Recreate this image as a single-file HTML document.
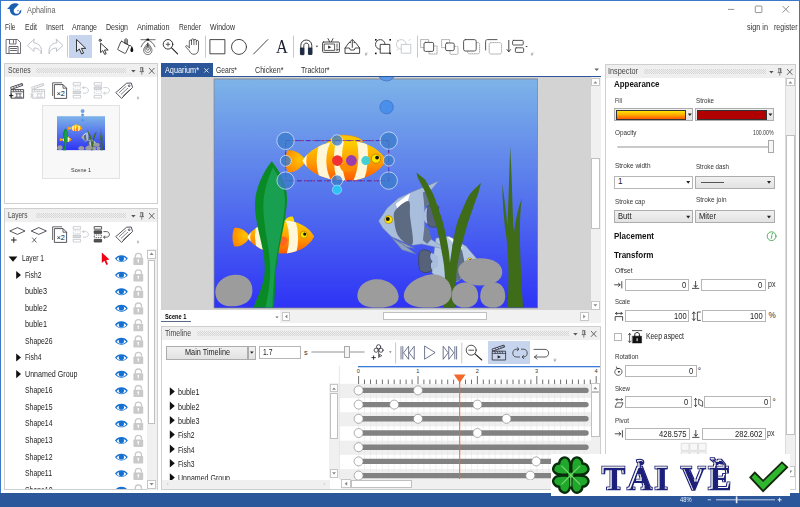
<!DOCTYPE html>
<html lang="en">
<head>
<meta charset="utf-8">
<title>Aphalina</title>
<style>
html,body{margin:0;padding:0;}
body{width:800px;height:507px;position:relative;overflow:hidden;background:#fff;font-family:"Liberation Sans",sans-serif;font-size:7.8px;color:#222;}
.a{position:absolute;}
.t{position:absolute;white-space:nowrap;line-height:10px;font-size:8.2px;color:#333;}
.b{font-weight:bold;color:#111;}
.panel{position:absolute;border:1px solid #cfcfcf;background:#fff;box-sizing:border-box;}
.phead{position:absolute;left:0;top:0;right:0;height:13px;background:#efefef;}
.grip{position:absolute;top:4px;height:5px;background-image:conic-gradient(#d6d6d6 25%,transparent 0 50%,#d6d6d6 0 75%,transparent 0);background-size:2px 2px;}
.inp{position:absolute;box-sizing:border-box;border:1px solid #b6b6b6;background:#fff;}
.btn{position:absolute;box-sizing:border-box;border:1px solid #acacac;background:linear-gradient(#f1f1f1,#e2e2e2);}
svg{position:absolute;overflow:visible;}
</style>
</head>
<body>
<div class="a" style="left:0;top:0;width:1.2px;height:507px;background:#3c78c8;"></div>
<div class="a" style="left:0;top:0;width:800px;height:0.9px;background:#3c78c8;"></div>
<div class="a" style="left:799px;top:0;width:1px;height:507px;background:#3c78c8;"></div>
<div class="a" style="left:0;top:493px;width:800px;height:14px;background:#2b579a;"></div>
<!-- TITLEBAR -->
<div id="titlebar">
<svg style="left:0;top:0" width="24" height="18" viewBox="0 0 24 18">
<path d="M19 4.5C17.6 3.4 15.4 3 13.4 3.4C11 3.9 9.6 5.4 9.2 7C8.6 7.4 7.8 8 7.1 8.7C8.1 8.9 9 9 9.8 9C9.6 11.4 10.8 13.8 13 15C15.4 16.2 18.6 15.6 20.2 13.6C21.2 12.4 21.5 11 21.2 9.5C20.8 10.3 20.2 10.9 19.4 11.2C19.6 12 19.2 13 18.2 13.5C16.8 14.2 15 13.8 14.2 12.6C13.4 11.4 13.6 9.8 14.6 8.6C15.6 7.4 17 6.6 17.6 5.4C18 5 18.6 4.7 19 4.5Z" fill="#1a60b0"/>
<path d="M18.8 10.2C18.4 11 17.6 11.4 16.8 11.2C17.6 10.9 18 10.4 18 9.8Z" fill="#1a60b0"/>
</svg>
<div class="t" style="transform:scaleX(0.894);transform-origin:0 0;left:27.4px;top:5.8px;color:#666">Aphalina</div>
<svg style="left:726px;top:4px" width="66" height="12" viewBox="0 0 66 12" fill="none" stroke="#777" stroke-width="0.8">
<path d="M2 5.4H8.2"/><rect x="29.3" y="2" width="6.6" height="6.6" rx="0.8"/><path d="M56.6 2L63 8.6M63 2L56.6 8.6"/>
</svg>
</div>
<!-- MENU -->
<div id="menubar">
<div class="t" style="transform:scaleX(0.795);transform-origin:0 0;left:5px;top:22.5px">File</div>
<div class="t" style="transform:scaleX(0.850);transform-origin:0 0;left:25px;top:22.5px">Edit</div>
<div class="t" style="transform:scaleX(0.854);transform-origin:0 0;left:45.5px;top:22.5px">Insert</div>
<div class="t" style="transform:scaleX(0.858);transform-origin:0 0;left:72px;top:22.5px">Arrange</div>
<div class="t" style="transform:scaleX(0.863);transform-origin:0 0;left:106px;top:22.5px">Design</div>
<div class="t" style="transform:scaleX(0.892);transform-origin:0 0;left:137px;top:22.5px">Animation</div>
<div class="t" style="transform:scaleX(0.819);transform-origin:0 0;left:178.5px;top:22.5px">Render</div>
<div class="t" style="transform:scaleX(0.858);transform-origin:0 0;left:210px;top:22.5px">Window</div>
<div class="t" style="transform:scaleX(0.887);transform-origin:0 0;left:747px;top:23px;color:#333">sign in</div>
<div class="t" style="transform:scaleX(0.860);transform-origin:0 0;left:773.5px;top:23px;color:#333">register</div>
</div>
<!-- TOOLBAR -->
<div id="toolbar">
<div class="a" style="left:69px;top:35px;width:22.5px;height:22.5px;background:#c6d4ee"></div>
<svg style="left:0;top:0" width="800" height="62" viewBox="0 0 800 62" fill="none" stroke="#3b3b45" stroke-width="0.9" stroke-linejoin="round" stroke-linecap="round">
<!-- separators -->
<g stroke="#c8c8c8" stroke-width="1"><path d="M67.5 36V57M205.5 36V57M293.5 36V57M417.5 36V57"/></g>
<!-- save -->
<g stroke="#4c4c58" stroke-width="0.8"><path d="M6.5 39.5H17.5L20.5 42.5V53.5H6.5Z"/><path d="M9.5 39.5V44H16V39.5M13.5 40.5V43"/></g><path d="M9 53.5V46.5H18V53.5M10.5 48.5H16.5M10.5 50.5H16.5" stroke="#555"/>
<!-- undo / redo -->
<g stroke="#bfc4ca" stroke-width="1"><path id="undo" d="M34 39.3L27.5 45.5L34 51.5V48C38 48 40.8 50.2 41.3 54C42.3 48 40 43.4 34 42.8Z"/>
<path d="M56.5 39.3L63 45.5L56.5 51.5V48C52.5 48 49.7 50.2 49.2 54C48.2 48 50.5 43.4 56.5 42.8Z"/></g>
<!-- arrow cursor -->
<path d="M76.5 39.8V51.6L79.3 49L81.6 54L83.6 53.1L81.4 48.4H85.4Z" stroke="#222" fill="#e8ecf6"/>
<!-- node tool -->
<circle cx="100.2" cy="40.3" r="1.1" stroke="#222"/><path d="M100.6 43.5V52.6L102.8 50.6L104.6 54.4L106.2 53.7L104.5 50H107.8Z" stroke="#222"/>
<!-- bucket -->
<g stroke="#222" stroke-width="0.8"><path d="M121.8 41.4L128.6 45Q129.3 45.5 129 46.2L125.8 52.9Q125.4 53.6 124.6 53.3L118.2 49.9Q117.5 49.4 117.9 48.7L120.8 41.8Q121.2 41.1 121.8 41.4Z"/><path d="M124.8 43.4V39.7Q124.8 39 125.4 39H126.7Q127.3 39 127.3 39.7V44.6M126 40.4V44M128.9 45.3L130.6 45.7"/></g>
<path d="M131.8 45.4C132.6 47.6 133.3 49 133.3 50.2C133.3 51.3 132.6 52 131.8 52C131 52 130.4 51.3 130.4 50.2C130.4 49 131.2 47.6 131.8 45.4Z" fill="#111" stroke="none"/>
<!-- pen -->
<path d="M140.9 39.6H155.1" stroke="#8a8a8a" stroke-width="1.1"/><ellipse cx="147.8" cy="39.6" rx="1.5" ry="1" fill="#111" stroke="none"/>
<path d="M141.2 46.8C142.6 43.2 145 40.6 147.8 40.2C150.6 40.6 153.4 43.2 155 46.8" stroke="#222" stroke-width="0.7"/>
<g stroke="#222" stroke-width="0.6"><path d="M147.8 43.2C145.2 45.8 143.6 48.4 143.6 50.2C143.6 52.8 145.4 54.6 147.8 54.6C150.2 54.6 152 52.8 152 50.2C152 48.4 150.4 45.8 147.8 43.2Z"/><path d="M147.8 44.6C146.2 46.6 145 48.2 145 49.6C145 51.2 146.2 52.4 147.8 52.4C149.4 52.4 150.6 51.2 150.6 49.6C150.6 48.2 149.4 46.6 147.8 44.6Z"/><path d="M147.8 45.8C147 47.2 146.4 48 146.4 48.8C146.4 49.6 147 50.2 147.8 50.2C148.6 50.2 149.2 49.6 149.2 48.8C149.2 48 148.6 47.2 147.8 45.8ZM147.8 43.6V48"/></g>
<!-- zoom -->
<circle cx="168" cy="44.3" r="4.8" stroke="#222"/><path d="M171.6 47.8L177.6 53.8" stroke="#222" stroke-width="1.1"/><path d="M166.2 44.3H169.8M168 42.5V46.1" stroke="#222" stroke-width="0.7"/>
<!-- hand -->
<path d="M189.3 47.6V41.1C189.3 39.8 191.5 39.8 191.5 41.1V39.9C191.5 38.5 193.9 38.5 193.9 39.9V40.3C193.9 39 196.3 39 196.3 40.3V41.3C196.3 40.1 198.5 40.1 198.5 41.3V49C198.5 52.5 196.6 54.3 194 54.3C191.6 54.3 190.4 53 189.2 50.6L186 47.2C185.2 46.2 186.2 45.2 187.2 45.8L189.3 47.6M191.5 41V44.6M193.9 40.3V44.6M196.3 41.3V44.6" stroke="#222" stroke-width="0.7"/>
<!-- rect / circle / line -->
<rect x="210.3" y="39.6" width="14.6" height="14.2" stroke="#333"/><circle cx="239" cy="46.9" r="7.5" stroke="#333"/><path d="M253.6 54L267.8 39.6" stroke="#333"/>
<!-- magnet -->
<path d="M300.8 54.3V45.5C300.8 38.2 311.8 38.2 311.8 45.5V54.3H308.8V45.8C308.8 42.2 303.8 42.2 303.8 45.8V54.3Z" stroke="#222"/><path d="M300.8 48H303.8V54.3H300.8ZM308.8 48H311.8V54.3H308.8Z" fill="#1c2a44" stroke="#1c2a44"/><path d="M315.6 45.8H318.2L316.9 47.2Z" fill="#333" stroke="none"/>
<!-- tv -->
<rect x="322.6" y="42" width="16.8" height="10.4" rx="1" stroke="#333"/><rect x="324.6" y="44" width="10" height="6.4" stroke="#333" stroke-width="0.8"/><path d="M328.2 45.6L331.2 47.2L328.2 48.8Z" fill="#222" stroke="none"/><path d="M329.6 41.8L328 38.6M331.4 41.8L333 38.6" stroke="#333"/><path d="M337 44V47.4" stroke="#333" stroke-width="0.8"/><circle cx="337" cy="49.6" r="0.9" stroke="#333" stroke-width="0.7"/>
<!-- upload -->
<path d="M345 48L349 42.6H350.6M354 42.6H355.6L359.6 48V53.4H345V48H349.4L350.4 50H354.2L355.2 48H359.6" stroke="#333"/><path d="M352.3 47.4V40M349.8 42L352.3 39.4L354.8 42" stroke="#333"/>
<!-- overflow marks -->
<g stroke="#888" stroke-width="0.6"><path d="M365.2 53.2H367.2M365.6 54.4H366.8L366.2 55.2Z M531.2 53.2H533.2M531.6 54.4H532.8L532.2 55.2Z"/></g>
<!-- group -->
<circle cx="380.3" cy="44.4" r="4.8" stroke="#333"/><rect x="380.6" y="44.4" width="9.2" height="8.8" fill="#fff" stroke="#333"/><g fill="#111" stroke="none"><rect x="375" y="39" width="1.6" height="1.6"/><rect x="389.4" y="39" width="1.6" height="1.6"/><rect x="375" y="52.6" width="1.6" height="1.6"/><rect x="389.4" y="52.6" width="1.6" height="1.6"/></g>
<!-- ungroup (disabled) -->
<g stroke="#c2c6cc"><circle cx="401.3" cy="44.4" r="4.8"/><rect x="401.6" y="44.4" width="9.2" height="8.8" fill="#fff"/><path d="M397 40L398 41M410 39.4L409 40.4M397 50L398 49" stroke-width="0.8"/></g>
<!-- order icons -->
<rect x="420.6" y="39.6" width="8" height="8" stroke="#999" stroke-dasharray="1 1" stroke-width="0.8"/><rect x="429" y="46" width="8" height="8" stroke="#999" stroke-dasharray="1 1" stroke-width="0.8"/><rect x="424" y="42.4" width="9.6" height="9" rx="1.4" fill="#fff" stroke="#444"/>
<rect x="441.6" y="39.6" width="8" height="8" stroke="#999" stroke-dasharray="1 1" stroke-width="0.8"/><rect x="450" y="46.4" width="8" height="8" rx="1" stroke="#999" stroke-dasharray="1 1" stroke-width="0.8"/><rect x="445.6" y="43" width="8.6" height="7.6" rx="1.4" fill="#fff" stroke="#444"/>
<rect x="467.6" y="42.6" width="12" height="11.2" rx="1.6" stroke="#999" stroke-dasharray="1 1" stroke-width="0.8"/><rect x="463.6" y="39.6" width="12.6" height="11.4" rx="1.8" fill="#fff" stroke="#444"/>
<path d="M485.6 50V41.4C485.6 40.2 486.4 39.6 487.4 39.6H497" stroke="#444"/><rect x="489.2" y="42.6" width="12.4" height="11.4" rx="1.8" fill="#fff" stroke="#999" stroke-dasharray="1 1" stroke-width="0.8"/>
<path d="M508.8 40.4V51.6M507 49.6L508.8 51.8L510.6 49.6" stroke="#333"/><rect x="512.6" y="40.4" width="10.6" height="4.6" rx="0.8" stroke="#444"/><rect x="515.4" y="47.8" width="8.2" height="4.6" rx="0.8" stroke="#444"/><path d="M525.4 46H527.8L526.6 47.3Z" fill="#333" stroke="none"/>
</svg>
<div class="a" style="left:275.5px;top:35.5px;font-family:'Liberation Serif',serif;font-size:19px;line-height:22px;color:#1b2233;transform:scaleX(0.86);transform-origin:0 0;">A</div>
</div>
<!-- SCENES -->
<div id="scenes">
<div class="panel" style="left:4px;top:63px;width:154px;height:141px"><div class="phead"></div><div class="grip" style="left:31px;width:90px"></div></div>
<div class="t" style="transform:scaleX(0.824);transform-origin:0 0;left:8px;top:66.1px;color:#444">Scenes</div>
<svg style="left:131px;top:66px" width="26" height="10" viewBox="0 0 26 10" fill="none" stroke="#555" stroke-width="0.8"><path d="M0.2 4H4.6L2.4 6.4Z" fill="#555" stroke="none"/><path d="M9.2 1.6H12.2M9.8 1.6V5.6M11.8 1.6V5.6M8.6 5.6H13M10.8 5.6V8.6M11.6 2V5.4" stroke-width="0.7"/><path d="M18 2L23.4 7.8M23.4 2L18 7.8" stroke-width="0.9"/></svg><svg style="left:0;top:0" width="160" height="110" viewBox="0 0 160 110" fill="none" stroke="#2b2b35" stroke-width="0.8" stroke-linejoin="round">
<g id="clapA"><path d="M10.6 87.4L22.2 83.4L22.8 85.4L11.2 89.4Z"/><path d="M13 86.6L14.4 88.2M15.6 85.7L17 87.3M18.2 84.8L19.6 86.4M20.6 84L21.8 85.5" stroke-width="0.7"/><rect x="11" y="89.6" width="12.6" height="8.6"/><path d="M11 91.8H23.6M13 89.6L14 91.8M15.4 89.6L16.4 91.8M17.8 89.6L18.8 91.8M20.2 89.6L21.2 91.8" stroke-width="0.7"/><path d="M15.4 93.8H21.6M16.8 93.8V97M20 93.8V97M14.6 97.2H22.4" stroke-width="0.7"/><path d="M9 95.6H13.4M11.2 93.4V97.8" stroke="#111" stroke-width="0.9"/></g>
<g stroke="#bdbfc4"><path d="M31.6 87.4L43.2 83.4L43.8 85.4L32.2 89.4Z"/><path d="M34 86.6L35.4 88.2M36.6 85.7L38 87.3M39.2 84.8L40.6 86.4M41.6 84L42.8 85.5" stroke-width="0.7"/><rect x="32" y="89.6" width="12.6" height="8.6"/><path d="M32 91.8H44.6M34 89.6L35 91.8M36.4 89.6L37.4 91.8M38.8 89.6L39.8 91.8M41.2 89.6L42.2 91.8" stroke-width="0.7"/><path d="M36.4 93.8H42.6M37.8 93.8V97M41 93.8V97M35.6 97.2H43.4" stroke-width="0.7"/><path d="M30.2 93.6L34 97.6M34 93.6L30.2 97.6" stroke-width="0.8"/></g>
<g id="dupA"><path d="M52.6 96V82.8H62" stroke="#444"/><path d="M54.4 84.6H63L66.6 88.2V98.4H54.4Z" fill="#fff"/><path d="M63 84.6V88.2H66.6" stroke-width="0.7"/></g>
<g stroke="#c2c4c9" stroke-width="0.8"><rect x="73.2" y="82.6" width="7.4" height="2.6"/><rect x="73.2" y="86.8" width="7.4" height="2.6" stroke-dasharray="1 0.8"/><rect x="73.2" y="91" width="7.4" height="2.6" fill="#d9dbde"/><rect x="73.2" y="95.4" width="7.4" height="2.6"/><path d="M82.4 87.6H85.4C89.4 87.6 89.4 93.2 85.4 93.2H83M84.2 86.2L82.4 87.6L84.2 89"/></g>
<g stroke="#c2c4c9" stroke-width="0.8"><rect x="94.2" y="82.6" width="7.4" height="2.6"/><rect x="94.2" y="86.8" width="7.4" height="2.6" fill="#d9dbde"/><rect x="94.2" y="91" width="7.4" height="2.6" stroke-dasharray="1 0.8"/><rect x="94.2" y="95.4" width="7.4" height="2.6"/><path d="M103.4 87.6H106.4C110.4 87.6 110.4 93.2 106.4 93.2H104M105.2 91.8L103.4 93.2L105.2 94.6"/></g>
<g id="tagA"><path d="M115.8 92.6L126.6 83.2L131.2 83L132.6 87.4L121.6 98.4Z"/><circle cx="129.2" cy="85.8" r="0.9" stroke-width="0.7"/><path d="M119 92.8L126.2 86.2M120.8 94.6L128 88M122.6 96.2L129.6 89.8" stroke-width="0.6"/></g>
<path d="M137 97.2H139M137.4 98.4H138.6L138 99.2Z" stroke="#888" stroke-width="0.6"/>
</svg>
<div class="t" style="left:56.6px;top:88.6px;font-size:7.4px;color:#111;letter-spacing:-0.2px">×2</div>
<div class="a" style="left:41.9px;top:104.5px;width:77.8px;height:74.2px;box-sizing:border-box;border:1px solid #e2e2e2;background:#f8f8f8"></div>
<svg style="left:0;top:0" width="160" height="200" viewBox="0 0 160 200"><use href="#scn" transform="translate(25.13 104.43) scale(0.14865)"/></svg>
<div class="t" style="transform:scaleX(0.880);transform-origin:0 0;left:70.8px;top:165.4px;font-size:6.2px;color:#333">Scene 1</div>
</div>
<!-- LAYERS -->
<div id="layers">
<div class="panel" style="left:4px;top:207.5px;width:154px;height:282.5px;overflow:hidden"><div class="phead"></div><div class="grip" style="left:31px;width:90px"></div></div>
<div class="t" style="transform:scaleX(0.793);transform-origin:0 0;left:8px;top:210.5px;color:#444">Layers</div>
<svg style="left:131px;top:210.5px" width="26" height="10" viewBox="0 0 26 10" fill="none" stroke="#555" stroke-width="0.8"><path d="M0.2 4H4.6L2.4 6.4Z" fill="#555" stroke="none"/><path d="M9.2 1.6H12.2M9.8 1.6V5.6M11.8 1.6V5.6M8.6 5.6H13M10.8 5.6V8.6M11.6 2V5.4" stroke-width="0.7"/><path d="M18 2L23.4 7.8M23.4 2L18 7.8" stroke-width="0.9"/></svg><svg style="left:0;top:144.4px" width="160" height="110" viewBox="0 0 160 110" fill="none" stroke="#2b2b35" stroke-width="0.8" stroke-linejoin="round">
<path d="M9.8 87L17.4 83.6L25 87L17.4 90.4Z"/><path d="M11 96H16.6M13.8 93.2V98.8" stroke="#111" stroke-width="0.9"/>
<path d="M31.2 87L38.8 83.6L46.4 87L38.8 90.4Z"/><path d="M32.2 93.6L36.4 98.4M36.4 93.6L32.2 98.4" stroke-width="0.7"/>
<g><path d="M52.6 96V82.8H62" stroke="#444"/><path d="M54.4 84.6H63L66.6 88.2V98.4H54.4Z" fill="#fff"/><path d="M63 84.6V88.2H66.6" stroke-width="0.7"/></g>
<g stroke="#c2c4c9" stroke-width="0.8"><rect x="73.2" y="82.6" width="7.4" height="2.6"/><rect x="73.2" y="86.8" width="7.4" height="2.6" stroke-dasharray="1 0.8"/><rect x="73.2" y="91" width="7.4" height="2.6" fill="#d9dbde"/><rect x="73.2" y="95.4" width="7.4" height="2.6"/><path d="M82.4 87.6H85.4C89.4 87.6 89.4 93.2 85.4 93.2H83M84.2 86.2L82.4 87.6L84.2 89"/></g>
<g stroke="#333" stroke-width="0.8"><rect x="94.2" y="82.6" width="7.4" height="2.6"/><rect x="94.2" y="86.8" width="7.4" height="2.6" fill="#555"/><rect x="94.2" y="91" width="7.4" height="2.6" stroke-dasharray="1 0.8"/><rect x="94.2" y="95.4" width="7.4" height="2.6" fill="#555"/><path d="M103.4 87.6H106.4C110.4 87.6 110.4 93.2 106.4 93.2H104M105.2 91.8L103.4 93.2L105.2 94.6"/></g>
<g><path d="M115.8 92.6L126.6 83.2L131.2 83L132.6 87.4L121.6 98.4Z"/><circle cx="129.2" cy="85.8" r="0.9" stroke-width="0.7"/><path d="M119 92.8L126.2 86.2M120.8 94.6L128 88M122.6 96.2L129.6 89.8" stroke-width="0.6"/></g>
<path d="M137 97.2H139M137.4 98.4H138.6L138 99.2Z" stroke="#888" stroke-width="0.6"/>
</svg>
<div class="t" style="left:56.6px;top:233px;font-size:7.4px;color:#111;letter-spacing:-0.2px">×2</div>
<div class="a" style="left:5px;top:248px;width:152px;height:241px;overflow:hidden">
<svg style="left:-5px;top:-248px" width="160" height="507" viewBox="0 0 160 507">
<defs><g id="eye"><path d="M-6.4 0C-3.6 -4.6 3.6 -4.6 6.4 0C3.6 4.6 -3.6 4.6 -6.4 0Z" fill="#1470d2"/><path d="M-4.9 0.4C-2.6 -2.5 2.6 -2.5 4.9 0.4C2.6 3.5 -2.6 3.5 -4.9 0.4Z" fill="#fff"/><circle cx="0" cy="-0.1" r="2.6" fill="#1470d2"/></g><g id="lock"><path d="M-3 1V-2.4C-3 -6.4 3.2 -6.4 3.2 -2.4V-1.4" fill="none" stroke="#c9c9c9" stroke-width="1.3"/><rect x="-4.9" y="-1.2" width="9.8" height="7.4" rx="0.8" fill="#c9c9c9"/><path d="M0 1V4" stroke="#fff" stroke-width="1"/><circle cx="0" cy="1.3" r="0.9" fill="#fff"/></g></defs>
<use href="#eye" x="121.4" y="258.6"/><use href="#lock" x="138.3" y="258.8"/><path d="M8.6 256.6H17.4L13 261.8Z" fill="#111"/>
<use href="#eye" x="121.4" y="275.1"/><use href="#lock" x="138.3" y="275.3"/><path d="M16.2 270.9V279.1L21 275.0Z" fill="#111"/>
<use href="#eye" x="121.4" y="291.7"/><use href="#lock" x="138.3" y="291.9"/>
<use href="#eye" x="121.4" y="308.2"/><use href="#lock" x="138.3" y="308.4"/>
<use href="#eye" x="121.4" y="324.8"/><use href="#lock" x="138.3" y="325.0"/>
<use href="#eye" x="121.4" y="341.2"/><use href="#lock" x="138.3" y="341.4"/>
<use href="#eye" x="121.4" y="357.6"/><use href="#lock" x="138.3" y="357.8"/><path d="M16.2 353.4V361.6L21 357.5Z" fill="#111"/>
<use href="#eye" x="121.4" y="374.2"/><use href="#lock" x="138.3" y="374.4"/><path d="M16.2 370.0V378.2L21 374.1Z" fill="#111"/>
<use href="#eye" x="121.4" y="390.7"/><use href="#lock" x="138.3" y="390.9"/>
<use href="#eye" x="121.4" y="407.3"/><use href="#lock" x="138.3" y="407.5"/>
<use href="#eye" x="121.4" y="423.9"/><use href="#lock" x="138.3" y="424.1"/>
<use href="#eye" x="121.4" y="440.5"/><use href="#lock" x="138.3" y="440.7"/>
<use href="#eye" x="121.4" y="457.1"/><use href="#lock" x="138.3" y="457.3"/>
<use href="#eye" x="121.4" y="473.6"/><use href="#lock" x="138.3" y="473.8"/>
<use href="#eye" x="121.4" y="490.2"/><use href="#lock" x="138.3" y="490.4"/>
<path d="M101.8 252.4V263L104.4 260.8L106.4 265L108 264.2L106.2 260.2L109.4 259.4Z" fill="#f00014"/>
</svg>
<div class="t" style="transform:scaleX(0.805);transform-origin:0 0;left:16.5px;top:6.0px;color:#222">Layer 1</div>
<div class="t" style="transform:scaleX(0.824);transform-origin:0 0;left:20px;top:22.5px;color:#222">Fish2</div>
<div class="t" style="transform:scaleX(0.895);transform-origin:0 0;left:20px;top:39.1px;color:#222">buble3</div>
<div class="t" style="transform:scaleX(0.895);transform-origin:0 0;left:20px;top:55.6px;color:#222">buble2</div>
<div class="t" style="transform:scaleX(0.895);transform-origin:0 0;left:20px;top:72.2px;color:#222">buble1</div>
<div class="t" style="transform:scaleX(0.838);transform-origin:0 0;left:20px;top:88.6px;color:#222">Shape26</div>
<div class="t" style="transform:scaleX(0.824);transform-origin:0 0;left:20px;top:105.0px;color:#222">Fish4</div>
<div class="t" style="transform:scaleX(0.867);transform-origin:0 0;left:20px;top:121.6px;color:#222">Unnamed Group</div>
<div class="t" style="transform:scaleX(0.838);transform-origin:0 0;left:20px;top:138.1px;color:#222">Shape16</div>
<div class="t" style="transform:scaleX(0.838);transform-origin:0 0;left:20px;top:154.7px;color:#222">Shape15</div>
<div class="t" style="transform:scaleX(0.838);transform-origin:0 0;left:20px;top:171.3px;color:#222">Shape14</div>
<div class="t" style="transform:scaleX(0.838);transform-origin:0 0;left:20px;top:187.9px;color:#222">Shape13</div>
<div class="t" style="transform:scaleX(0.838);transform-origin:0 0;left:20px;top:204.5px;color:#222">Shape12</div>
<div class="t" style="transform:scaleX(0.839);transform-origin:0 0;left:20px;top:221.0px;color:#222">Shape11</div>
<div class="t" style="transform:scaleX(0.838);transform-origin:0 0;left:20px;top:237.6px;color:#222">Shape10</div>
</div>
<div class="a" style="left:146.5px;top:248.5px;width:10.5px;height:241px;background:#f0f0f0"></div>
<div class="a" style="left:147.3px;top:249.5px;width:8.6px;height:9px;box-sizing:border-box;border:1px solid #c6c6c6;background:#fff"></div>
<div class="a" style="left:147.8px;top:260px;width:7.6px;height:164px;box-sizing:border-box;border:1px solid #c0c0c0;background:#fff"></div>
<div class="a" style="left:147.3px;top:479.5px;width:8.6px;height:9.5px;box-sizing:border-box;border:1px solid #c6c6c6;background:#fff"></div>
<svg style="left:147px;top:249px" width="10" height="241" viewBox="0 0 10 241"><path d="M2.6 6H6.6L4.6 3.6Z M2.6 234H6.6L4.6 236.4Z" fill="#888"/></svg>
</div>
<!-- DOCUMENT AREA -->
<div id="doc">
<div class="a" style="left:161px;top:63.3px;width:51.7px;height:13.3px;background:#2b579a"></div>
<div class="a" style="left:161px;top:75.6px;width:439.5px;height:1.2px;background:#2b579a"></div>
<div class="t" style="transform:scaleX(0.889);transform-origin:0 0;left:164.5px;top:65.9px;color:#fff">Aquarium*</div>
<svg style="left:203.8px;top:67.6px" width="5" height="5" viewBox="0 0 5 5"><path d="M0.3 0.3L4.5 4.5M4.5 0.3L0.3 4.5" stroke="#fff" stroke-width="0.8"/></svg>
<div class="t" style="transform:scaleX(0.824);transform-origin:0 0;left:216px;top:65.9px;color:#333">Gears*</div>
<div class="t" style="transform:scaleX(0.869);transform-origin:0 0;left:254.5px;top:65.9px;color:#333">Chicken*</div>
<div class="t" style="transform:scaleX(0.866);transform-origin:0 0;left:300.5px;top:65.9px;color:#333">Tracktor*</div>
<svg style="left:594px;top:68.4px" width="6" height="4" viewBox="0 0 6 4"><path d="M0.4 0.4H5L2.7 3Z" fill="#666"/></svg>
<!-- gray work area -->
<div class="a" style="left:161px;top:76.8px;width:429.5px;height:233.2px;background:#d3d3d3;overflow:hidden">
<svg style="left:0;top:0" width="430" height="234" viewBox="161 76.8 430 234">
<defs>
<linearGradient id="sea" x1="0" y1="0" x2="0" y2="1"><stop offset="0" stop-color="#7db3e8"/><stop offset="0.45" stop-color="#5a7cec"/><stop offset="1" stop-color="#2e33f6"/></linearGradient>
<linearGradient id="fo" x1="0" y1="0" x2="0" y2="1"><stop offset="0" stop-color="#ffd400"/><stop offset="0.55" stop-color="#ff9a00"/><stop offset="1" stop-color="#ff5a00"/></linearGradient>
<radialGradient id="ft" cx="0.7" cy="0.4" r="0.8"><stop offset="0" stop-color="#ffc400"/><stop offset="1" stop-color="#ff8200"/></radialGradient>
<clipPath id="b1"><path d="M302.4 160.6C310 147.4 328 140.2 346 140.2C364 140.2 379.6 148 386.4 160C379.6 172.4 364 180.6 346 180.6C328 180.6 310 174.4 302.4 160.6Z"/></clipPath>
<clipPath id="b2"><path d="M247.4 236.8C254 226 268 220 282 220C297 220 309 226.4 314.2 236.2C309 246.6 297 253.2 282 253.2C268 253.2 254 248 247.4 236.8Z"/></clipPath>
</defs>
<rect x="213.7" y="78.3" width="324.2" height="229.8" fill="#7f828c"/>
<g id="scn">
<rect x="214.4" y="79.2" width="322.9" height="228.2" fill="url(#sea)"/>
<!-- bubbles -->
<circle cx="386.6" cy="45" r="12.6" fill="#6aa2e8" stroke="#4a7ccc" stroke-width="0.7"/>
<circle cx="386.6" cy="71.6" r="9.2" fill="#5b97e4" stroke="#3f6fc0" stroke-width="0.7"/>
<circle cx="386.6" cy="106.9" r="6.7" fill="#4a90ea" stroke="#3a6cc4" stroke-width="0.7"/>
<!-- fish 1 -->
<g id="fish1">
<path d="M326 143.6C331 137 338 134.4 346 135C354 135.6 360 137.4 363.4 141.4Z" fill="#ffc400" stroke="#f08a00" stroke-width="0.5"/>
<path d="M306.5 160.5C301 153 293 148.6 287.6 150.4C284.6 155 284.6 166.6 287.6 171.6C293 173.6 301 168.4 306.5 160.5Z" fill="url(#ft)"/>
<path id="body1" d="M302.4 160.6C310 147.4 328 140.2 346 140.2C364 140.2 379.6 148 386.4 160C379.6 172.4 364 180.6 346 180.6C328 180.6 310 174.4 302.4 160.6Z" fill="url(#fo)"/>
<g clip-path="url(#b1)" fill="none" stroke="#fff7d8"><path d="M306 150C303.4 157 303.4 165 306 172" stroke-width="4.6"/><path d="M327 138C319.6 152 319.6 170 327.6 184" stroke-width="9.6"/><path d="M341 136C336.6 152 337 170 343 186" stroke-width="8"/><path d="M361 138C364.6 152 364 170 357 184" stroke-width="9.6"/></g>
<path d="M339.5 164.6C343 163 352 162.6 355.8 165C355 169.4 350 172 345 171.6C342 171.2 340 168.6 339.5 164.6Z" fill="#ff8c00"/>
<circle cx="375.9" cy="158.5" r="4.6" fill="#ffe400" stroke="#8a6a00" stroke-width="0.6"/><circle cx="377.1" cy="157.4" r="1.9" fill="#111"/>
</g>
<!-- fish 2 -->
<g id="fish2">
<path d="M283.6 222.4C286 217.6 289 215.6 292.6 216.4C294 218.4 294.4 220.4 294.2 222.6Z" fill="#ffd800"/>
<path d="M250.4 236.8C246 230.4 239.6 226.4 234.4 227.8C231.8 231.8 231.8 241.8 234.4 246C239.6 247.6 246 243.2 250.4 236.8Z" fill="url(#ft)"/>
<path d="M247.4 236.8C254 226 268 220 282 220C297 220 309 226.4 314.2 236.2C309 246.6 297 253.2 282 253.2C268 253.2 254 248 247.4 236.8Z" fill="url(#fo)"/>
<g clip-path="url(#b2)" fill="none" stroke="#fff7d8"><path d="M250.2 228C247.4 233.6 247.4 240 250.2 246" stroke-width="4.2"/><path d="M262 218C257 231 257 243 263 256" stroke-width="7"/><path d="M289 216C295 230 295 244 290 258" stroke-width="9"/></g>
<path d="M279.6 238C282 235.4 286.4 236 287.6 239.4C287.4 243.6 284 246.6 281 245.8C279.4 244 279 240.6 279.6 238Z" fill="#ff6420"/>
<circle cx="303.9" cy="234.5" r="3.5" fill="#ffe400" stroke="#8a6a00" stroke-width="0.5"/><circle cx="304.7" cy="233.9" r="1.6" fill="#111"/>
</g>
<!-- big leaf -->
<path d="M271.7 161C279 170 287.6 184 287 200C286.4 222 277 250 275.6 276C275 290 274.4 300 274 307.4H253.4C258 296 264 284 264.6 272C266 248 254.4 226 255 203C255.4 188 263 172 271.7 161Z" fill="#0a8a24"/>
<path d="M273 167C279 177 285.4 188 285 202C284.4 222 276 250 274.2 276C273.4 288 272.6 298 272.4 307.4H265.4C268 296 270 284 270.2 272C270.6 248 262.6 226 263.4 203C264 190 268 178 273 167Z" fill="#18a050"/>
<!-- angel fish 2 (behind) -->
<g id="angel2">
<path d="M436 238L449 236L466 246L477.6 259.6L474 268L458 281L440 284L432 272L434 252Z" fill="#b4c8e2" stroke="#7c8ca8" stroke-width="0.5"/>
<path d="M452 244L462 250L465 264L460 280L452 282L456 264Z" fill="#5e6e86"/>
<path d="M447 236.6L452 238L463 248L458 247Z" fill="#fff"/>
<path d="M419.4 252C422 248.6 428 249 431 252.6C429.6 256 430 259 432.6 261C430 263.6 430.6 267 432 270C428 273.4 422 273 419.6 269.6C418.4 264 418.4 257.6 419.4 252Z" fill="#56627a" stroke="#3a4456" stroke-width="0.8"/>
<path d="M431 252.6C429.6 256 430 259 432.6 261C430 263.6 430.6 267 432 270L438 266V256Z" fill="#a9bedc"/>
<circle cx="469.7" cy="260.3" r="2.6" fill="#ffe400" stroke="#8a6a00" stroke-width="0.5"/><circle cx="470.3" cy="259.9" r="1.2" fill="#111"/>
</g>
<!-- angel fish 1 -->
<g id="angel1">
<path d="M378.6 220.8L387.2 207.9L398.6 197.9L412.9 191.3L430.1 184.5L438.7 180.7L431.5 189.3L425.8 193.6L424.4 205.1L424.4 226.5L431.5 239.4L447.3 249.4L434.4 246.6L421.5 243.7L412.9 245.1L401.5 240.8L391.5 236.6L382.9 228.0Z" fill="#a9bedc" stroke="#7686a2" stroke-width="0.5" stroke-linejoin="round"/>
<path d="M395.8 203.6L410.1 193.0L407.8 200.8L397.2 208.5Z" fill="#fff"/>
<path d="M395.2 210.2C397.6 206.9 406.2 199.7 408.6 200.8C411.1 201.8 409.4 209.6 410.1 216.5C410.8 223.4 413.6 237.9 412.9 242.3C412.2 246.7 408.4 244.3 405.8 242.8C403.2 241.4 399.1 237.4 397.2 233.7C395.3 230.0 394.7 224.7 394.3 220.8C394.0 216.9 392.8 213.6 395.2 210.2Z" fill="#5c6a82"/>
<path d="M422.9 192.2L430.7 188.5L428.7 205.1L424.4 206.5Z" fill="#66758e"/><path d="M424.4 226.5L428.7 228.5L431.5 238.8L427.2 243.7L422.9 240.0Z" fill="#66758e"/>
<path d="M427.4 206.4C430 203.4 436 203.6 439 207C437.6 210.4 438 213.6 440.6 215.6C438 218.2 438.6 221.6 440 224.6C436 228 430 227.6 427.6 224.2C426.4 218.6 426.4 212 427.4 206.4Z" fill="#56627a" stroke="#3a4456" stroke-width="0.8"/>
<path d="M427.4 207C426.4 212 426.4 218.6 427.6 223.6C424.6 222 423 219 423.6 215C424 211 425.4 208.4 427.4 207Z" fill="#a9bedc"/>
<path d="M391.5 237.1L404 245L415.8 253.7L402 249.6ZM398.6 240.8L407 244.6L414.4 248L405 246.6Z" fill="#8ea2c2" stroke="#6a7a96" stroke-width="0.5"/>
<circle cx="388.6" cy="219.4" r="4" fill="#ffe400" stroke="#8a6a00" stroke-width="0.5"/><circle cx="387.8" cy="218.8" r="2" fill="#111"/>
</g>
<!-- grass -->
<g fill="#3e6c18">
<path d="M416.4 172.2C416.8 173.4 417.1 175.7 418.7 179.3C420.3 182.9 423.9 188.8 425.9 193.6C427.9 198.4 429.1 203.2 430.7 208.0C432.3 212.8 433.9 217.5 435.3 222.3C436.7 227.1 437.8 231.8 438.8 236.6C439.9 241.4 440.7 246.2 441.6 251.0C442.5 255.8 443.4 260.5 444.0 265.3C444.6 270.1 444.9 274.8 445.0 279.6C445.1 284.4 444.8 289.4 444.5 294.0C444.2 298.6 443.2 305.2 443.0 307.4L453.0 307.4C452.9 305.2 452.7 298.6 452.5 294.0C452.3 289.4 452.0 284.4 451.6 279.6C451.2 274.8 450.7 270.1 450.2 265.3C449.7 260.5 449.5 255.8 448.8 251.0C448.1 246.2 447.2 241.4 446.2 236.6C445.2 231.8 444.3 227.1 443.0 222.3C441.7 217.5 439.9 212.8 438.2 208.0C436.5 203.2 435.2 198.4 433.0 193.6C430.8 188.8 426.3 181.7 425.0 179.3Z"/>
<path d="M481.0 182.7C479.2 184.5 473.2 189.4 470.2 193.6C467.2 197.8 465.1 203.2 463.0 208.0C460.9 212.8 458.8 217.5 457.3 222.3C455.8 227.1 454.9 231.8 454.0 236.6C453.1 241.4 452.3 246.2 451.6 251.0C450.9 255.8 450.1 260.5 449.6 265.3C449.1 270.1 448.8 274.8 448.4 279.6C448.0 284.4 447.8 289.4 447.4 294.0C447.0 298.6 446.2 305.2 446.0 307.4L455.0 307.4C455.1 305.2 455.2 298.6 455.4 294.0C455.6 289.4 455.7 284.4 456.0 279.6C456.3 274.8 456.7 270.1 457.4 265.3C458.1 260.5 459.1 255.8 460.2 251.0C461.3 246.2 462.7 241.4 464.0 236.6C465.3 231.8 466.5 227.1 468.0 222.3C469.5 217.5 471.3 212.8 473.0 208.0C474.7 203.2 477.3 196.0 478.2 193.6Z"/>
<path d="M502.3 183.6C504 196 505.6 208 506.8 220L507.6 226C508.4 200 509.4 172 510.2 146C511.6 172 512.4 200 513.2 226L514 232C515.6 220 518 208 521.8 198C519.4 216 519.6 236 520.4 256C521 274 522 292 523.2 307.4H507.5C508.6 290 508.8 272 508 256C507.4 244 506.4 236 505 228C503.4 214 502.4 198 502.3 183.6Z"/>
</g>
<!-- rocks -->
<g fill="#9c9c9c">
<path d="M215.4 293C215 283 224 274.6 236 274.6C247 274.6 253 282 252.4 291C252 299 247 304 237 305.8C226 307.4 216 304 215.4 293Z"/>
<path d="M357.4 296C357 286 366 279 377 279C389 279 398 287 398.6 296C399 303 392 307.4 378 307.4C365 307.4 357.8 304 357.4 296Z"/>
<path d="M403.8 296C403.4 286 416 276 432 274C444 273.4 451.6 282 451.6 292C451.6 302 444 307.4 428 307.4C414 307.4 404.4 304 403.8 296Z"/>
<path d="M451.6 296C451.6 288 457 282.4 465 282.4C473 282.4 478.2 288 478.2 296C478.2 303 473 307.4 465 307.4C457 307.4 451.6 303 451.6 296Z"/>
<path d="M480.2 296C480.2 288 485 282 493 282C501 282 505.2 288 505.2 296C505.2 303 501 307.4 493 307.4C485 307.4 480.2 303 480.2 296Z"/>
<path d="M458.2 270C458.2 263 467 258 480 258C494 258 502.3 264 502.3 272C502.3 280 493 285.3 480 285.3C467 285.3 458.2 278 458.2 270Z"/>
</g>
</g>
<!-- selection -->
<rect x="285.6" y="140.4" width="103.1" height="40.2" fill="none" stroke="#e02030" stroke-width="0.8" stroke-dasharray="4 3"/>
<rect x="285.6" y="140.4" width="103.1" height="40.2" fill="none" stroke="#2030e0" stroke-width="0.8" stroke-dasharray="5 2 1 2"/>
<g fill="#3b7ccc" fill-opacity="0.78" stroke="#e6eefc" stroke-opacity="0.85" stroke-width="0.8">
<circle cx="285.5" cy="140.6" r="8.7"/><circle cx="388.7" cy="140.4" r="8.7"/><circle cx="285.6" cy="180.4" r="8.7"/><circle cx="388.7" cy="180.4" r="8.7"/>
<circle cx="285.8" cy="160.6" r="5.5"/><circle cx="388.8" cy="160.3" r="5.5"/><circle cx="337" cy="140.2" r="5.6"/><circle cx="337" cy="180.4" r="5.6"/>
</g>
<circle cx="337" cy="189.5" r="4.6" fill="#2cc4f4" stroke="#bfe6fa" stroke-width="0.6"/>
<circle cx="337.4" cy="160.4" r="5.3" fill="#f03034"/><circle cx="351.4" cy="160.3" r="5.4" fill="#9a3cae"/><circle cx="365.8" cy="160.4" r="4.5" fill="#42d0d2"/>
</svg>
</div>
<!-- v scrollbar -->
<div class="a" style="left:590.5px;top:76.8px;width:10px;height:233.2px;background:#f0f0f0"></div>
<div class="a" style="left:591px;top:78px;width:8.8px;height:8.4px;box-sizing:border-box;border:1px solid #c6c6c6;background:#fff"></div>
<div class="a" style="left:591px;top:158.4px;width:8.8px;height:70.4px;box-sizing:border-box;border:1px solid #c0c0c0;background:#fff"></div>
<div class="a" style="left:591px;top:301.4px;width:8.8px;height:8.4px;box-sizing:border-box;border:1px solid #c6c6c6;background:#fff"></div>
<svg style="left:591px;top:78px" width="9" height="232" viewBox="0 0 9 232"><path d="M2.4 5.6H6.4L4.4 3.2Z M2.4 226.2H6.4L4.4 228.6Z" fill="#888"/></svg>
<!-- scene tabs / h scrollbar -->
<div class="a" style="left:161px;top:310px;width:439.5px;height:12.6px;background:#f1f1f1"></div>
<div class="a" style="left:161px;top:310px;width:119px;height:12.6px;background:#fff"></div>
<div class="t b" style="transform:scaleX(0.769);transform-origin:0 0;left:165px;top:312px;font-size:7.4px;color:#000">Scene 1</div>
<div class="a" style="left:161px;top:320.6px;width:29.5px;height:1.2px;background:#5a6a86"></div>
<svg style="left:274.5px;top:315.6px" width="5" height="4" viewBox="0 0 5 4"><path d="M0.4 0.4H3.6L2 2.2Z" fill="#666"/></svg>
<div class="a" style="left:282px;top:312.2px;width:8.4px;height:8.4px;box-sizing:border-box;border:1px solid #c6c6c6;background:#fff"></div>
<div class="a" style="left:382.8px;top:312.4px;width:104.6px;height:8px;box-sizing:border-box;border:1px solid #c0c0c0;background:#fff"></div>
<div class="a" style="left:579.5px;top:312.2px;width:9.5px;height:8.4px;box-sizing:border-box;border:1px solid #c6c6c6;background:#fff"></div>
<svg style="left:282px;top:312px" width="308" height="9" viewBox="0 0 308 9"><path d="M5.4 2.4V6.4L3 4.4Z M301.2 2.4V6.4L303.6 4.4Z" fill="#888"/></svg>
</div>
<!-- TIMELINE -->
<div id="timeline">
<div class="panel" style="left:161px;top:326.3px;width:439.5px;height:163.7px"><div class="phead"></div><div class="grip" style="left:35px;width:372px"></div></div>
<div class="t" style="transform:scaleX(0.849);transform-origin:0 0;left:165px;top:329.4px;color:#444">Timeline</div>
<svg style="left:573px;top:329.3px" width="26" height="10" viewBox="0 0 26 10" fill="none" stroke="#555" stroke-width="0.8"><path d="M0.2 4H4.6L2.4 6.4Z" fill="#555" stroke="none"/><path d="M9.2 1.6H12.2M9.8 1.6V5.6M11.8 1.6V5.6M8.6 5.6H13M10.8 5.6V8.6M11.6 2V5.4" stroke-width="0.7"/><path d="M18 2L23.4 7.8M23.4 2L18 7.8" stroke-width="0.9"/></svg><div class="btn" style="left:166.4px;top:345.6px;width:82px;height:14px"></div>
<div class="btn" style="left:248px;top:345.6px;width:7.6px;height:14px"></div>
<div class="t" style="transform:scaleX(0.891);transform-origin:0 0;left:184.8px;top:348.2px;color:#222">Main Timeline</div>
<div class="inp" style="left:259px;top:346.4px;width:42px;height:12.6px"></div>
<div class="t" style="transform:scaleX(0.825);transform-origin:0 0;left:262.5px;top:348.4px;color:#222">1.7</div>
<div class="t" style="left:304px;top:348.4px;font-size:7.4px;color:#333">s</div>
<div class="a" style="left:311px;top:351.4px;width:53.6px;height:2px;box-sizing:border-box;border:0.6px solid #c9c9c9;background:#e8e8e8;border-radius:1px"></div>
<div class="a" style="left:344px;top:346px;width:6.2px;height:12.4px;box-sizing:border-box;border:1px solid #a8a8a8;background:#f4f4f4"></div>
<div class="a" style="left:487.6px;top:341px;width:42.4px;height:22.5px;background:#c6d4ee"></div>
<svg style="left:0;top:0" width="800" height="370" viewBox="0 0 800 370" fill="none" stroke="#2b2b35" stroke-width="0.8" stroke-linejoin="round" stroke-linecap="round">
<path d="M250 351.4H253.6L251.8 353.8Z" fill="#222" stroke="none"/>
<!-- key icon -->
<circle cx="378.6" cy="346.8" r="2.1"/><circle cx="376.2" cy="350.2" r="2.1"/><circle cx="381" cy="350.2" r="2.1"/><path d="M378.6 351.6V357.4M379.8 354.4L381.8 355.6L379.8 356.8Z" stroke-width="0.7"/><path d="M371.8 357.6H375.4M373.6 355.8V359.4" stroke="#111" stroke-width="0.8"/><path d="M389 351.4H391.6L390.3 352.8Z" fill="#444" stroke="none"/>
<path d="M395.6 343V363M461.8 343V363" stroke="#c8c8c8" stroke-width="1"/>
<!-- prev play next -->
<path d="M401 346.6V359M402.8 346.6V359" stroke="#4a5670"/><path d="M408.4 346.6L403.6 352.8L408.4 359ZM414 346.6L409.2 352.8L414 359Z" stroke="#4a5670"/>
<path d="M424.6 346.4V359.2L434.8 352.8Z" stroke="#4a5670"/>
<path d="M443.4 346.6L448.2 352.8L443.4 359ZM449 346.6L453.8 352.8L449 359Z" stroke="#4a5670"/><path d="M454.8 346.6V359M456.6 346.6V359" stroke="#4a5670"/>
<!-- zoom out -->
<circle cx="471.2" cy="350.2" r="5" stroke="#222"/><path d="M475 353.8L481.8 360" stroke="#222" stroke-width="1.1"/><path d="M468.8 350.2H473.6" stroke="#222" stroke-width="0.8"/>
<!-- clapper play -->
<path d="M492.4 349L504 345L504.6 347L493 351Z"/><path d="M494.8 348.2L496.2 349.8M497.4 347.3L498.8 348.9M500 346.4L501.4 348M502.4 345.6L503.6 347.1" stroke-width="0.7"/><rect x="492.6" y="351.2" width="13" height="8.8"/><path d="M492.6 353.4H505.6M494.6 351.2L495.6 353.4M497 351.2L498 353.4M499.4 351.2L500.4 353.4M501.8 351.2L502.8 353.4" stroke-width="0.7"/><path d="M497.6 355.2L501 356.9L497.6 358.6Z" fill="#222" stroke="none"/>
<!-- loop -->
<path d="M518.4 349.2H516.4C511.6 349.2 511.6 357 516.4 357H519.6M521.4 349.2H523.6C528.4 349.2 528.4 357 523.6 357H522.6" stroke="#333"/><path d="M517.2 347.6L519 349.2L517.2 350.8M523.8 355.4L522 357L523.8 358.6" stroke="#333"/>
<!-- return arrow -->
<path d="M534 349.4H545C549.8 349.4 549.8 357 545 357H534.6M537 355L534.4 357L537 359" stroke="#333"/>
<path d="M554 359.2H556M554.4 360.4H555.6L555 361.2Z" stroke="#888" stroke-width="0.6"/>
</svg>
<div class="a" style="left:162px;top:366px;width:438px;height:113.6px;overflow:hidden">
<svg style="left:-162px;top:-366px" width="800" height="507" viewBox="0 0 800 507">
<rect x="339.4" y="383.8" width="252" height="14.2" fill="#efefef"/><rect x="339.4" y="412.2" width="252" height="14.2" fill="#efefef"/><rect x="339.4" y="440.6" width="252" height="14.2" fill="#efefef"/><rect x="339.4" y="469.0" width="252" height="14.2" fill="#efefef"/>
<path d="M339.4 366V479" stroke="#e0e0e0" stroke-width="0.8"/>
<path d="M358.6 384V479M364.5 384V479M370.5 384V479M376.4 384V479M382.4 384V479M388.3 384V479M394.2 384V479M400.2 384V479M406.1 384V479M412.1 384V479M418.0 384V479M423.9 384V479M429.9 384V479M435.8 384V479M441.8 384V479M447.7 384V479M453.6 384V479M459.6 384V479M465.5 384V479M471.5 384V479M477.4 384V479M483.3 384V479M489.3 384V479M495.2 384V479M501.2 384V479M507.1 384V479M513.0 384V479M519.0 384V479M524.9 384V479M530.9 384V479M536.8 384V479M542.7 384V479M548.7 384V479M554.6 384V479M560.6 384V479M566.5 384V479M572.4 384V479M578.4 384V479M584.3 384V479" stroke="#e2e2e2" stroke-width="0.5"/>
<rect x="358" y="366" width="243" height="1.3" fill="#3c7ad8"/>
<path d="M358.6 376V384M364.5 379.6V384M370.5 379.6V384M376.4 379.6V384M382.4 379.6V384M388.3 379.6V384M394.2 379.6V384M400.2 379.6V384M406.1 379.6V384M412.1 379.6V384M418.0 376V384M423.9 379.6V384M429.9 379.6V384M435.8 379.6V384M441.8 379.6V384M447.7 379.6V384M453.6 379.6V384M459.6 379.6V384M465.5 379.6V384M471.5 379.6V384M477.4 376V384M483.3 379.6V384M489.3 379.6V384M495.2 379.6V384M501.2 379.6V384M507.1 379.6V384M513.0 379.6V384M519.0 379.6V384M524.9 379.6V384M530.9 379.6V384M536.8 376V384M542.7 379.6V384M548.7 379.6V384M554.6 379.6V384M560.6 379.6V384M566.5 379.6V384M572.4 379.6V384M578.4 379.6V384M584.3 379.6V384M590.3 379.6V384M596.2 376V384" stroke="#333" stroke-width="0.7"/>
<text x="358.4" y="372.6" font-size="5.6" fill="#333" text-anchor="middle" font-family="Liberation Sans, sans-serif">0</text><text x="417.8" y="372.6" font-size="5.6" fill="#333" text-anchor="middle" font-family="Liberation Sans, sans-serif">1</text><text x="477.2" y="372.6" font-size="5.6" fill="#333" text-anchor="middle" font-family="Liberation Sans, sans-serif">2</text><text x="536.6" y="372.6" font-size="5.6" fill="#333" text-anchor="middle" font-family="Liberation Sans, sans-serif">3</text><text x="596.0" y="372.6" font-size="5.6" fill="#333" text-anchor="middle" font-family="Liberation Sans, sans-serif">4</text>
<path d="M358.6 390.4H586" stroke="#828282" stroke-width="5.4" stroke-linecap="round"/><circle cx="358.6" cy="390.4" r="4.5" fill="#fff" stroke="#8c8c8c" stroke-width="0.7"/><circle cx="418.0" cy="390.4" r="4.5" fill="#fff" stroke="#8c8c8c" stroke-width="0.7"/>
<path d="M358.6 404.6H586" stroke="#828282" stroke-width="5.4" stroke-linecap="round"/><circle cx="358.6" cy="404.6" r="4.5" fill="#fff" stroke="#8c8c8c" stroke-width="0.7"/><circle cx="394.2" cy="404.6" r="4.5" fill="#fff" stroke="#8c8c8c" stroke-width="0.7"/><circle cx="477.4" cy="404.6" r="4.5" fill="#fff" stroke="#8c8c8c" stroke-width="0.7"/>
<path d="M358.6 418.8H586" stroke="#828282" stroke-width="5.4" stroke-linecap="round"/><circle cx="358.6" cy="418.8" r="4.5" fill="#fff" stroke="#8c8c8c" stroke-width="0.7"/><circle cx="418.0" cy="418.8" r="4.5" fill="#fff" stroke="#8c8c8c" stroke-width="0.7"/><circle cx="506.5" cy="418.8" r="4.5" fill="#fff" stroke="#8c8c8c" stroke-width="0.7"/>
<path d="M358.6 433.0H586" stroke="#828282" stroke-width="5.4" stroke-linecap="round"/><circle cx="358.6" cy="433.0" r="4.5" fill="#fff" stroke="#8c8c8c" stroke-width="0.7"/><circle cx="477.4" cy="433.0" r="4.5" fill="#fff" stroke="#8c8c8c" stroke-width="0.7"/>
<path d="M358.6 447.2H586" stroke="#828282" stroke-width="5.4" stroke-linecap="round"/><circle cx="358.6" cy="447.2" r="4.5" fill="#fff" stroke="#8c8c8c" stroke-width="0.7"/>
<path d="M358.6 461.4H586" stroke="#828282" stroke-width="5.4" stroke-linecap="round"/><circle cx="358.6" cy="461.4" r="4.5" fill="#fff" stroke="#8c8c8c" stroke-width="0.7"/><circle cx="536.2" cy="461.4" r="4.5" fill="#fff" stroke="#8c8c8c" stroke-width="0.7"/>
<path d="M358.6 475.6H586" stroke="#828282" stroke-width="5.4" stroke-linecap="round"/><circle cx="358.6" cy="475.6" r="4.5" fill="#fff" stroke="#8c8c8c" stroke-width="0.7"/><circle cx="530.3" cy="475.6" r="4.5" fill="#fff" stroke="#8c8c8c" stroke-width="0.7"/>
<path d="M459.7 382V479" stroke="#f26a2a" stroke-width="1"/><path d="M453.8 374.6H465.6L459.7 382.8Z" fill="#f26a2a"/>
<path d="M169.8 387.2V395.8L174.8 391.5Z" fill="#111"/><path d="M169.8 401.6V410.2L174.8 405.9Z" fill="#111"/><path d="M169.8 415.9V424.5L174.8 420.2Z" fill="#111"/><path d="M169.8 430.3V438.9L174.8 434.6Z" fill="#111"/><path d="M169.8 444.6V453.2L174.8 448.9Z" fill="#111"/><path d="M169.8 459.0V467.6L174.8 463.2Z" fill="#111"/><path d="M169.8 473.3V481.9L174.8 477.6Z" fill="#111"/>
</svg>
<div class="t" style="transform:scaleX(0.874);transform-origin:0 0;left:16px;top:22.2px;color:#222">buble1</div>
<div class="t" style="transform:scaleX(0.874);transform-origin:0 0;left:16px;top:36.6px;color:#222">buble2</div>
<div class="t" style="transform:scaleX(0.874);transform-origin:0 0;left:16px;top:50.9px;color:#222">buble3</div>
<div class="t" style="transform:scaleX(0.824);transform-origin:0 0;left:16px;top:65.3px;color:#222">Fish2</div>
<div class="t" style="transform:scaleX(0.824);transform-origin:0 0;left:16px;top:79.6px;color:#222">Fish4</div>
<div class="t" style="transform:scaleX(0.824);transform-origin:0 0;left:16px;top:94.0px;color:#222">Fish3</div>
<div class="t" style="transform:scaleX(0.859);transform-origin:0 0;left:16px;top:108.3px;color:#222">Unnamed Group</div>
</div>
<div class="a" style="left:329px;top:383.4px;width:10px;height:95px;background:#f0f0f0"></div>
<div class="a" style="left:329.6px;top:384px;width:8.8px;height:8.4px;box-sizing:border-box;border:1px solid #c6c6c6;background:#fff"></div>
<div class="a" style="left:329.6px;top:392.6px;width:8.8px;height:46.2px;box-sizing:border-box;border:1px solid #c0c0c0;background:#fff"></div>
<div class="a" style="left:329.6px;top:469.4px;width:8.8px;height:8.6px;box-sizing:border-box;border:1px solid #c6c6c6;background:#fff"></div>
<div class="a" style="left:590.6px;top:383px;width:9.6px;height:95.4px;background:#f0f0f0"></div>
<div class="a" style="left:590.9px;top:383.4px;width:8.8px;height:8.6px;box-sizing:border-box;border:1px solid #c6c6c6;background:#fff"></div>
<div class="a" style="left:590.9px;top:392.4px;width:8.8px;height:45px;box-sizing:border-box;border:1px solid #c0c0c0;background:#fff"></div>
<div class="a" style="left:162px;top:479.6px;width:438px;height:9.4px;background:#f0f0f0"></div>
<div class="a" style="left:330px;top:479.6px;width:10.6px;height:9.4px;background:#fff"></div>
<div class="a" style="left:341.4px;top:479.4px;width:9.6px;height:8.8px;box-sizing:border-box;border:1px solid #c6c6c6;background:#fff"></div>
<div class="a" style="left:351.4px;top:479.6px;width:61px;height:8.4px;box-sizing:border-box;border:1px solid #c0c0c0;background:#fff"></div>
<svg style="left:0;top:0" width="800" height="507" viewBox="0 0 800 507"><path d="M332 389.8H336L334 387.4ZM332 472.2H336L334 474.6ZM593.3 389.2H597.3L595.3 386.8ZM344.6 483.8L347.2 481.8V485.8Z" fill="#888"/><path d="M166.6 483.8L168.2 482.4V485.2ZM325.4 483.8L323.8 482.4V485.2Z" fill="#ccc"/></svg>
</div>
<!-- INSPECTOR -->
<div id="inspector">
<div class="panel" style="left:604.5px;top:63.5px;width:191px;height:426.5px"><div class="phead"></div><div class="grip" style="left:38px;width:122px"></div></div>
<div class="t" style="transform:scaleX(0.891);transform-origin:0 0;left:608px;top:66.5px;color:#444">Inspector</div>
<svg style="left:768.5px;top:66.5px" width="26" height="10" viewBox="0 0 26 10" fill="none" stroke="#555" stroke-width="0.8"><path d="M0.2 4H4.6L2.4 6.4Z" fill="#555" stroke="none"/><path d="M9.2 1.6H12.2M9.8 1.6V5.6M11.8 1.6V5.6M8.6 5.6H13M10.8 5.6V8.6M11.6 2V5.4" stroke-width="0.7"/><path d="M18 2L23.4 7.8M23.4 2L18 7.8" stroke-width="0.9"/></svg><div class="t b" style="transform:scaleX(0.865);transform-origin:0 0;left:613.5px;top:79.3px;font-size:9.2px">Appearance</div>
<div class="t" style="transform:scaleX(0.740);transform-origin:0 0;left:614.5px;top:95.6px;font-size:7.4px">Fill</div>
<div class="t" style="transform:scaleX(0.842);transform-origin:0 0;left:696px;top:95.6px;font-size:7.4px">Stroke</div>
<div class="btn" style="left:614.2px;top:108px;width:79px;height:13.4px"></div>
<div class="a" style="left:616px;top:109.8px;width:70.4px;height:9.8px;box-sizing:border-box;border:0.8px solid #333;background:linear-gradient(#ffe400,#ffb000 45%,#ff5a00)"></div>
<div class="btn" style="left:695px;top:108px;width:79.4px;height:13.4px"></div>
<div class="a" style="left:697px;top:109.8px;width:70.4px;height:9.8px;box-sizing:border-box;border:0.8px solid #333;background:#b00000"></div>
<div class="t" style="transform:scaleX(0.858);transform-origin:0 0;left:614.5px;top:128.1px;font-size:7.4px">Opacity</div>
<div class="t" style="transform:scaleX(0.825);transform-origin:0 0;left:752.6px;top:128.2px;font-size:6.3px;color:#333">100.00%</div>
<div class="a" style="left:617px;top:145.6px;width:154px;height:2px;box-sizing:border-box;border:0.6px solid #c9c9c9;background:#e8e8e8;border-radius:1px"></div>
<div class="a" style="left:768px;top:140px;width:6.4px;height:13px;box-sizing:border-box;border:1px solid #a8a8a8;background:#f6f6f6"></div>
<div class="t" style="transform:scaleX(0.873);transform-origin:0 0;left:614.5px;top:160.7px;font-size:7.4px">Stroke width</div>
<div class="t" style="transform:scaleX(0.836);transform-origin:0 0;left:696px;top:162.2px;font-size:7.4px">Stroke dash</div>
<div class="inp" style="left:614.2px;top:175.5px;width:79px;height:13.2px"></div>
<div class="t" style="left:618px;top:177.4px;color:#222">1</div>
<div class="btn" style="left:695px;top:175.5px;width:79.6px;height:13.2px"></div>
<div class="a" style="left:701px;top:181.8px;width:23px;height:0.8px;background:#555"></div>
<div class="t" style="transform:scaleX(0.849);transform-origin:0 0;left:614.5px;top:196.6px;font-size:7.4px">Stroke cap</div>
<div class="t" style="transform:scaleX(0.873);transform-origin:0 0;left:696px;top:195.2px;font-size:7.4px">Stroke join</div>
<div class="btn" style="left:614.2px;top:210.2px;width:79px;height:13.2px"></div>
<div class="t" style="transform:scaleX(0.926);transform-origin:0 0;left:617.5px;top:212px;color:#222">Butt</div>
<div class="btn" style="left:695px;top:210.2px;width:79.6px;height:13.2px"></div>
<div class="t" style="transform:scaleX(0.934);transform-origin:0 0;left:698.5px;top:212px;color:#222">Miter</div>
<div class="t b" style="transform:scaleX(0.870);transform-origin:0 0;left:613.5px;top:231.2px;font-size:9.2px">Placement</div>
<div class="t b" style="transform:scaleX(0.879);transform-origin:0 0;left:613.5px;top:249.6px;font-size:9.2px">Transform</div>
<div class="t" style="transform:scaleX(0.893);transform-origin:0 0;left:614.5px;top:266.0px;font-size:7.4px">Offset</div>
<div class="t" style="transform:scaleX(0.811);transform-origin:0 0;left:614.5px;top:297.3px;font-size:7.4px">Scale</div>
<div class="t" style="transform:scaleX(0.854);transform-origin:0 0;left:614.5px;top:352.4px;font-size:7.4px">Rotation</div>
<div class="t" style="transform:scaleX(0.830);transform-origin:0 0;left:614.5px;top:383.6px;font-size:7.4px">Skew</div>
<div class="t" style="transform:scaleX(0.852);transform-origin:0 0;left:614.5px;top:415.8px;font-size:7.4px">Pivot</div>
<div class="inp" style="left:624.9px;top:278.6px;width:64.6px;height:12.4px"></div>
<div class="t" style="transform:scaleX(0.899);transform-origin:0 0;left:681.9px;top:279.7px;font-size:8.4px;color:#222">0</div>
<div class="inp" style="left:701.2px;top:278.6px;width:64.8px;height:12.4px"></div>
<div class="t" style="transform:scaleX(0.899);transform-origin:0 0;left:758.4px;top:279.7px;font-size:8.4px;color:#222">0</div>
<div class="t" style="transform:scaleX(0.866);transform-origin:0 0;left:768px;top:279.8px">px</div>
<div class="inp" style="left:624.9px;top:309.9px;width:64.6px;height:12.4px"></div>
<div class="t" style="transform:scaleX(0.901);transform-origin:0 0;left:673.5px;top:311.0px;font-size:8.4px;color:#222">100</div>
<div class="inp" style="left:702.2px;top:309.9px;width:63.8px;height:12.4px"></div>
<div class="t" style="transform:scaleX(0.901);transform-origin:0 0;left:750.0px;top:311.0px;font-size:8.4px;color:#222">100</div>
<div class="t" style="left:768.6px;top:311px">%</div>
<div class="inp" style="left:614.2px;top:333px;width:8px;height:8px;border-color:#b4b4b4"></div>
<div class="t" style="transform:scaleX(0.835);transform-origin:0 0;left:646.2px;top:332.2px;color:#222">Keep aspect</div>
<div class="inp" style="left:624.9px;top:365px;width:71.7px;height:12.4px"></div>
<div class="t" style="transform:scaleX(0.899);transform-origin:0 0;left:689.0px;top:366.1px;font-size:8.4px;color:#222">0</div>
<div class="t" style="left:697.8px;top:366.6px;color:#111">°</div>
<div class="inp" style="left:625.1px;top:396.4px;width:66.7px;height:11.8px"></div>
<div class="t" style="transform:scaleX(0.899);transform-origin:0 0;left:684.2px;top:397.2px;font-size:8.4px;color:#222">0</div>
<div class="inp" style="left:704px;top:396.4px;width:67.4px;height:11.8px"></div>
<div class="t" style="transform:scaleX(0.899);transform-origin:0 0;left:763.8px;top:397.2px;font-size:8.4px;color:#222">0</div>
<div class="t" style="left:772.6px;top:398px;color:#111">°</div>
<div class="inp" style="left:625px;top:427.6px;width:64.5px;height:12.2px"></div>
<div class="t" style="transform:scaleX(0.908);transform-origin:0 0;left:658.6px;top:428.6px;font-size:8.4px;color:#222">428.575</div>
<div class="inp" style="left:701.5px;top:427.6px;width:64.4px;height:12.2px"></div>
<div class="t" style="transform:scaleX(0.908);transform-origin:0 0;left:735.0px;top:428.6px;font-size:8.4px;color:#222">282.602</div>
<div class="t" style="transform:scaleX(0.866);transform-origin:0 0;left:767.4px;top:429px">px</div>
<svg style="left:0;top:0" width="800" height="507" viewBox="0 0 800 507" fill="none" stroke="#222" stroke-width="0.8" stroke-linecap="round" stroke-linejoin="round">
<path d="M687.8 113.4H691.8L689.8 116.1ZM768.4 113.4H772.4L770.4 116.1ZM686.2 181.0H690.2L688.2 183.7ZM767.0 181.0H771.0L769.0 183.7ZM686.2 215.8H690.2L688.2 218.5ZM767.0 215.8H771.0L769.0 218.5Z" fill="#222" stroke="none"/>
<circle cx="771.6" cy="236.2" r="4.4" stroke="#2e9e3a" stroke-width="0.8"/><path d="M772 234.8L771.2 238.4" stroke="#2e9e3a" stroke-width="0.8"/><circle cx="772.3" cy="233.4" r="0.4" fill="#2e9e3a" stroke="#2e9e3a" stroke-width="0.4"/>
<!-- offset icons -->
<path d="M614.6 284.8H620M618.4 283.2L620.2 284.8L618.4 286.4M621.8 281.6V288"/><path d="M695.6 281.4V287.2M694 285.4L695.6 287.2L697.2 285.4M692.4 288.4H698.8"/>
<!-- scale icons -->
<path d="M615.6 313.4H622.2M616.8 312.2L615.6 313.4L616.8 314.6M621 312.2L622.2 313.4L621 314.6M615.2 320.4V316.6H622.6V320.4"/>
<path d="M693.8 312V320.4M692.4 313.6L693.8 312L695.2 313.6M692.4 318.8L693.8 320.4L695.2 318.8M700.4 312H697.4V320.4H700.4"/>
<!-- keep aspect lock -->
<path d="M629.6 333.4V342.4M628.4 334.8L629.6 333.4L630.8 334.8M628.4 341L629.6 342.4L630.8 341" stroke-width="0.7"/><path d="M632.4 330.6H641.8" stroke-width="0.8"/>
<path d="M634.8 336.4V334.6C634.8 331.8 639.4 331.8 639.4 334.6V336.4" stroke="#111" stroke-width="1"/><rect x="632.6" y="336.2" width="9" height="6.8" fill="#111" stroke="#111" stroke-width="0.5"/><path d="M637.1 338.6V340.8" stroke="#fff" stroke-width="1"/>
<!-- rotation icon -->
<path d="M617 368.6C614.6 369.8 614 373 616 374.6C618.2 376.2 621.6 375 622 372.2C622.4 369.6 620 367.8 617.8 368.4M616.4 366.8L617 368.8L619 368.4" stroke-width="0.7"/><circle cx="618.8" cy="371.8" r="0.5" fill="#222"/>
<!-- skew icons -->
<path d="M617.4 402.8H623L621.2 407.2H615.4ZM616 399.6H622.6M617.2 398.4L616 399.6L617.2 400.8M621.4 398.4L622.6 399.6L621.4 400.8" stroke-width="0.7"/>
<path d="M699 399.4L702.6 401.4V406.4L699 404.6ZM695.6 398.4V406.6M694.4 399.8L695.6 398.4L696.8 399.8M694.4 405.2L695.6 406.6L696.8 405.2" stroke-width="0.7"/>
<!-- pivot icons -->
<path d="M615.2 433.8H620.6M619 432.2L620.8 433.8L619 435.4M622.4 430.6V437"/><path d="M695.8 430.4V436.2M694.2 434.4L695.8 436.2L697.4 434.4M692.6 437.4H699"/>
<!-- pivot grid -->
<g stroke="#d2d2d2" stroke-width="0.7" fill="#f7f7f7"><rect x="681.6" y="443.2" width="7.4" height="7.4"/><rect x="690.2" y="443.2" width="7.4" height="7.4"/><rect x="698.8" y="443.2" width="7.4" height="7.4"/><rect x="681.6" y="451.8" width="7.4" height="7.4"/><rect x="690.2" y="451.8" width="7.4" height="7.4"/><rect x="698.8" y="451.8" width="7.4" height="7.4"/></g>
</svg>
<div class="a" style="left:785px;top:77px;width:10px;height:401px;background:#f0f0f0;border-left:0.6px solid #dcdcdc;box-sizing:border-box"></div>
<div class="a" style="left:785.8px;top:78px;width:8.8px;height:8.4px;box-sizing:border-box;border:1px solid #c6c6c6;background:#fff"></div>
<div class="a" style="left:785.8px;top:134.5px;width:8.8px;height:300px;box-sizing:border-box;border:1px solid #c0c0c0;background:#fff"></div>
<div class="a" style="left:785.8px;top:466.4px;width:8.8px;height:11px;box-sizing:border-box;border:1px solid #c6c6c6;background:#fff"></div>
<svg style="left:785.8px;top:78px" width="9" height="400" viewBox="0 0 9 400"><path d="M2.4 5.6H6.4L4.4 3.2Z M2.4 392.6H6.4L4.4 395Z" fill="#888"/></svg>
</div>
<!-- STATUS + OVERLAY -->
<div id="statusbar">
<div class="t" style="transform:scaleX(0.899);transform-origin:0 0;left:679.6px;top:494.8px;font-size:6.4px;color:#e8eef8">48%</div>
<svg style="left:700px;top:494px" width="90" height="12" viewBox="700 494 90 12" stroke="#e8eef8" fill="none"><path d="M707.6 499.8H711M716 499.8H775" stroke-width="0.8"/><path d="M736.6 496.4V503.2" stroke-width="1.6"/><path d="M777.6 499.8H781.6M779.6 497.8V501.8" stroke-width="1"/></svg>
</div>
<div id="overlay">
<div class="a" style="left:550.6px;top:454.4px;width:239.2px;height:42px;background:#fff"></div>
<svg style="left:550px;top:454px" width="240" height="43" viewBox="550 454 240 43">
<defs><filter id="inl" x="-5%" y="-20%" width="110%" height="140%"><feMorphology in="SourceAlpha" operator="erode" radius="1" result="e1"/><feOffset in="e1" dx="1.3" dy="0.5" result="e1s"/><feComposite in="e1" in2="e1s" operator="out" result="ring"/><feFlood flood-color="#fff"/><feComposite in2="ring" operator="in" result="wring"/><feMerge><feMergeNode in="SourceGraphic"/><feMergeNode in="wring"/></feMerge></filter></defs>
<!-- clover -->
<g transform="translate(570.8 475.1) scale(0.9)" stroke="#0a2c0c" stroke-width="2.6" fill="#1fa82c" stroke-linejoin="round"><path transform="rotate(45)" d="M0 -1C-3 -5 -10.6 -8.4 -10.6 -14.8C-10.6 -20.4 -3.6 -22 0 -18.2C3.6 -22 10.6 -20.4 10.6 -14.8C10.6 -8.4 3 -5 0 -1Z"/><path transform="rotate(135)" d="M0 -1C-3 -5 -10.6 -8.4 -10.6 -14.8C-10.6 -20.4 -3.6 -22 0 -18.2C3.6 -22 10.6 -20.4 10.6 -14.8C10.6 -8.4 3 -5 0 -1Z"/><path transform="rotate(225)" d="M0 -1C-3 -5 -10.6 -8.4 -10.6 -14.8C-10.6 -20.4 -3.6 -22 0 -18.2C3.6 -22 10.6 -20.4 10.6 -14.8C10.6 -8.4 3 -5 0 -1Z"/><path transform="rotate(315)" d="M0 -1C-3 -5 -10.6 -8.4 -10.6 -14.8C-10.6 -20.4 -3.6 -22 0 -18.2C3.6 -22 10.6 -20.4 10.6 -14.8C10.6 -8.4 3 -5 0 -1Z"/><circle r="3" stroke="none"/></g>
<g transform="translate(570.8 475.1) scale(0.9)" stroke="#7fd672" stroke-width="1.3" stroke-linecap="round"><path d="M-10 -10L10 10M10 -10L-10 10M0 2V12"/></g>
<!-- check -->
<path d="M750.3 477.4L754.8 472.6L763.1 480.8L782 462.4L787.2 467.2L763.1 491.2Z" fill="#2fb62f" stroke="#13260c" stroke-width="1.8" stroke-linejoin="miter"/>
<text x="602" y="489" font-family="Liberation Serif, serif" font-weight="bold" font-size="34" fill="#1b207c" stroke="#1b207c" stroke-width="2.3" textLength="129" lengthAdjust="spacing" filter="url(#inl)">TẢI VỀ</text>
</svg>
</div>

</body>
</html>
